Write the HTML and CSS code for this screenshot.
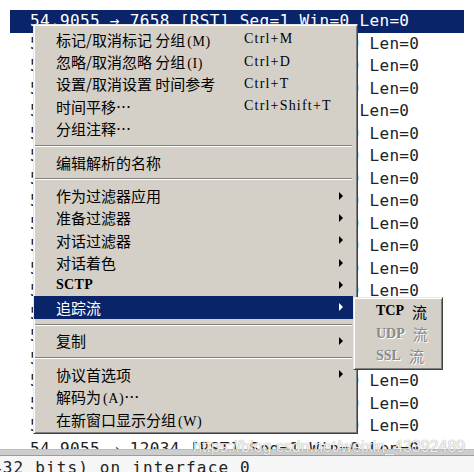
FILE: index.html
```html
<!DOCTYPE html>
<html>
<head>
    <title>Packet list context menu</title>
    <link rel="stylesheet" href="styles.css">
</head>
<body>
    <div class="screen">
        <div class="packet-list">
            <div class="row selected">54.9055 → 7658 [RST] Seq=1 Win=0 Len=0</div>
            <div class="row">54.9055 → 12034 [RST] Seq=1 Win=0 Len=0</div>
            <div class="row">54.9055 → 12035 [RST] Seq=1 Win=0 Len=0</div>
            <div class="row">54.9055 → 12036 [RST] Seq=1 Win=0 Len=0</div>
            <div class="row">54.9055 → 7659 [RST] Seq=1 Win=0 Len=0</div>
            <div class="row">54.9055 → 12037 [RST] Seq=1 Win=0 Len=0</div>
            <div class="row">54.9055 → 12038 [RST] Seq=1 Win=0 Len=0</div>
            <div class="row">54.9055 → 12039 [RST] Seq=1 Win=0 Len=0</div>
            <div class="row">54.9055 → 12040 [RST] Seq=1 Win=0 Len=0</div>
            <div class="row">54.9055 → 12041 [RST] Seq=1 Win=0 Len=0</div>
            <div class="row">54.9055 → 12042 [RST] Seq=1 Win=0 Len=0</div>
            <div class="row">54.9055 → 12043 [RST] Seq=1 Win=0 Len=0</div>
            <div class="row">54.9055 → 12044 [RST] Seq=1 Win=0 Len=0</div>
            <div class="row">54.9055 → 12045 [RST] Seq=1 Win=0 Len=0</div>
            <div class="row">54.9055 → 12046 [RST] Seq=1 Win=0 Len=0</div>
            <div class="row">54.9055 → 12047 [RST] Seq=1 Win=0 Len=0</div>
            <div class="row">54.9055 → 12048 [RST] Seq=1 Win=0 Len=0</div>
            <div class="row">54.9055 → 12049 [RST] Seq=1 Win=0 Len=0</div>
            <div class="row">54.9055 → 12050 [RST] Seq=1 Win=0 Len=0</div>
            <div class="row">54.9055 → 12034 [RST] Seq=1 Win=0 Len=0</div>
        </div>
        <div class="splitter"></div>
        <div class="details">432 bits) on interface 0</div>

        <!-- right-click menu over the packet list -->
        <div class="context-menu">
            <div class="item"><span class="label">标记/取消标记 分组<span class="latin">(M)</span></span><span class="shortcut">Ctrl+M</span></div>
            <div class="item"><span class="label">忽略/取消忽略 分组<span class="latin">(I)</span></span><span class="shortcut">Ctrl+D</span></div>
            <div class="item"><span class="label">设置/取消设置 时间参考</span><span class="shortcut">Ctrl+T</span></div>
            <div class="item"><span class="label">时间平移⋯</span><span class="shortcut">Ctrl+Shift+T</span></div>
            <div class="item"><span class="label">分组注释⋯</span></div>
            <div class="sep"></div>
            <div class="item"><span class="label">编辑解析的名称</span></div>
            <div class="sep"></div>
            <div class="item"><span class="label">作为过滤器应用</span><span class="arrow"></span></div>
            <div class="item"><span class="label">准备过滤器</span><span class="arrow"></span></div>
            <div class="item"><span class="label">对话过滤器</span><span class="arrow"></span></div>
            <div class="item"><span class="label">对话着色</span><span class="arrow"></span></div>
            <div class="item"><span class="label latin">SCTP</span><span class="arrow"></span></div>
            <div class="item active"><span class="label">追踪流</span><span class="arrow"></span></div>
            <div class="sep"></div>
            <div class="item"><span class="label">复制</span><span class="arrow"></span></div>
            <div class="sep"></div>
            <div class="item"><span class="label">协议首选项</span><span class="arrow"></span></div>
            <div class="item"><span class="label">解码为<span class="latin">(A)</span>⋯</span></div>
            <div class="item"><span class="label">在新窗口显示分组<span class="latin">(W)</span></span></div>
        </div>

        <div class="submenu">
            <div class="item"><span class="latin">TCP</span><span class="stream">流</span></div>
            <div class="item disabled"><span class="latin">UDP</span><span class="stream">流</span></div>
            <div class="item disabled"><span class="latin">SSL</span><span class="stream">流</span></div>
        </div>

        <div class="watermark">https://blog.csdn.net/weixin_43392489</div>
    </div>
</body>
</html>
```

FILE: styles.css
```css
body { margin: 0; background: white; }
.screen { position: relative; width: 474px; height: 472px; overflow: hidden; background: white; }

.packet-list { height: 449px; padding-top: 10px; box-sizing: border-box; overflow: hidden; }
.row { margin: 0 10px; padding-left: 20px; height: 22.5px; line-height: 22.5px; font-family: "DejaVu Sans Mono", monospace; font-size: 16px; letter-spacing: 0.35px; color: #222; white-space: nowrap; }
.row.selected { background: #0a246a; color: white; }

.splitter { height: 5px; background: #cdcdcd; border-top: 1px solid #bdbdbd; border-bottom: 1px solid #9c9c9c; }
.details { margin-left: -8px; height: 20px; line-height: 24px; font-family: "DejaVu Sans Mono", monospace; font-size: 16px; letter-spacing: 1.15px; color: #222; background: #f6f6f6; white-space: nowrap; }

.context-menu { position: absolute; left: 33px; top: 24px; width: 325px; box-sizing: border-box; padding: 3px 4px 3px 0; background: #d4d0c8; border: 1px solid; border-color: #e8e6e2 #404040 #404040 #e8e6e2; box-shadow: inset 1px 1px 0 white, inset -1px -1px 0 #808080; }
.item { display: flex; align-items: center; height: 22.4px; padding-left: 22px; font-family: "Noto Sans CJK SC", sans-serif; font-size: 15px; color: black; white-space: nowrap; }
.item.active { background: #0a246a; color: white; }
.label { flex: none; width: 188px; }
.latin { font-family: "Liberation Serif", serif; font-size: 14px; letter-spacing: 0.6px; margin-left: 2px; }
.label.latin { margin-left: 0; letter-spacing: 0.3px; font-weight: bold; }
.shortcut { font-family: "Liberation Serif", serif; font-size: 14px; letter-spacing: 1.2px; }
.arrow { margin-left: auto; margin-right: 10px; width: 0; height: 0; border-top: 4px solid transparent; border-bottom: 4px solid transparent; border-left: 4px solid black; }
.item.active .arrow { border-left-color: white; }
.sep { margin: 5px 1px 4px 1px; border-top: 1px solid #808080; border-bottom: 1px solid white; }

.submenu { position: absolute; left: 353px; top: 297px; width: 90px; box-sizing: border-box; padding: 2px 0; background: #d4d0c8; border: 1px solid; border-color: #e8e6e2 #404040 #404040 #e8e6e2; box-shadow: inset 1px 1px 0 white, inset -1px -1px 0 #808080; }
.submenu .latin { margin-left: 0; letter-spacing: 0; font-weight: bold; }
.stream { margin-left: 8px; }
.item.disabled { color: #8a8a8a; text-shadow: 1px 1px 0 white; }

.watermark { position: absolute; left: 193px; top: 438px; font-family: "Liberation Sans", sans-serif; font-size: 16px; color: rgba(255, 255, 255, 0.9); text-shadow: 0 0 1px rgba(0, 0, 0, 0.5); white-space: nowrap; }
```
